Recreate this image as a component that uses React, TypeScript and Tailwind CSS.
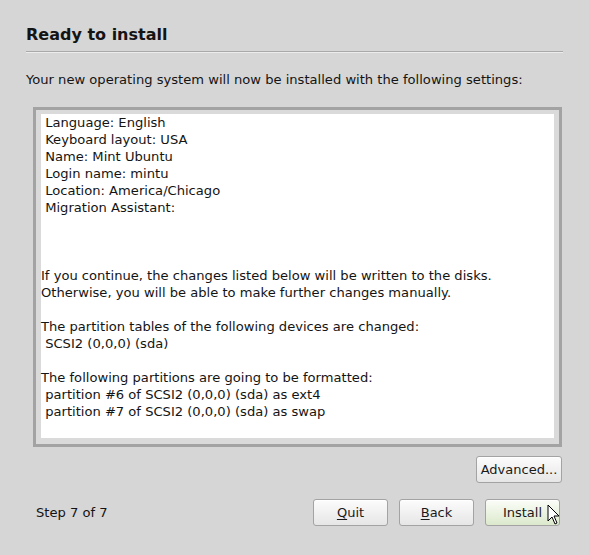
const lines = [
  " Language: English",
  " Keyboard layout: USA",
  " Name: Mint Ubuntu",
  " Login name: mintu",
  " Location: America/Chicago",
  " Migration Assistant:",
  "",
  "",
  "",
  "If you continue, the changes listed below will be written to the disks.",
  "Otherwise, you will be able to make further changes manually.",
  "",
  "The partition tables of the following devices are changed:",
  " SCSI2 (0,0,0) (sda)",
  "",
  "The following partitions are going to be formatted:",
  " partition #6 of SCSI2 (0,0,0) (sda) as ext4",
  " partition #7 of SCSI2 (0,0,0) (sda) as swap",
];

function GtkButton({
  children,
  className = "",
  hover = false,
}: {
  children: React.ReactNode;
  className?: string;
  hover?: boolean;
}) {
  return (
    <button
      type="button"
      className={`flex h-[27px] items-center justify-center rounded-[3px] border border-[#a3a3a3] text-[13px] text-[#1a1a1a] shadow-[inset_0_1px_0_#ffffff] ${
        hover
          ? "bg-gradient-to-b from-[#fbfdf8] to-[#dce9cc]"
          : "bg-gradient-to-b from-[#fcfcfc] to-[#e6e6e6]"
      } ${className}`}
    >
      {children}
    </button>
  );
}

export default function App() {
  return (
    <div
      className="relative h-[555px] w-[589px] bg-[#d6d6d6] text-[#141414]"
      style={{ fontFamily: '"DejaVu Sans", sans-serif' }}
    >
      <div className="flex flex-col pl-[26px] pr-[26px] pt-[25px]">
        <h1 className="text-[16px] font-bold leading-[20px]">Ready to install</h1>
        <div className="mt-[6px] h-[2px] border-t border-b border-t-[#a9a9a9] border-b-[#ececec]" />
        <p className="mt-[18px] text-[13.1px] leading-[17px]">
          Your new operating system will now be installed with the following settings:
        </p>
        <div className="ml-[7px] mr-[1px] mt-[19px] h-[340px] border-[3px] border-[#a3a3a3] bg-[#dadada] p-[5px]">
          <div className="h-full bg-white">
            <div className="-mt-[1px]">
              {lines.map((l, i) => (
                <div key={i} className="h-[17px] whitespace-pre text-[13.1px] leading-[17px]">
                  {l}
                </div>
              ))}
            </div>
          </div>
        </div>
        <div className="mt-[9px] flex justify-end pr-[1px]">
          <GtkButton className="w-[86px] h-[26px]">Advanced...</GtkButton>
        </div>
        <div className="mt-[16px] flex items-center">
          <span className="ml-[10px] text-[13.1px]">Step 7 of 7</span>
          <div className="ml-auto mr-[3px] flex gap-[11px]">
            <GtkButton className="w-[75px]">
              <span className="underline underline-offset-2">Q</span>uit
            </GtkButton>
            <GtkButton className="w-[75px]">
              <span className="underline underline-offset-2">B</span>ack
            </GtkButton>
            <GtkButton className="w-[75px]" hover>
              Install
            </GtkButton>
          </div>
        </div>
      </div>
      <svg
        className="absolute left-[547px] top-[504px]"
        width="14"
        height="22"
        viewBox="0 0 14 22"
      >
        <path
          d="M1 1 L1 17 L5 13 L8 20 L10 19 L7 12 L12 12 Z"
          fill="#ffffff"
          stroke="#000000"
          strokeWidth="1"
          strokeLinejoin="miter"
        />
      </svg>
    </div>
  );
}
